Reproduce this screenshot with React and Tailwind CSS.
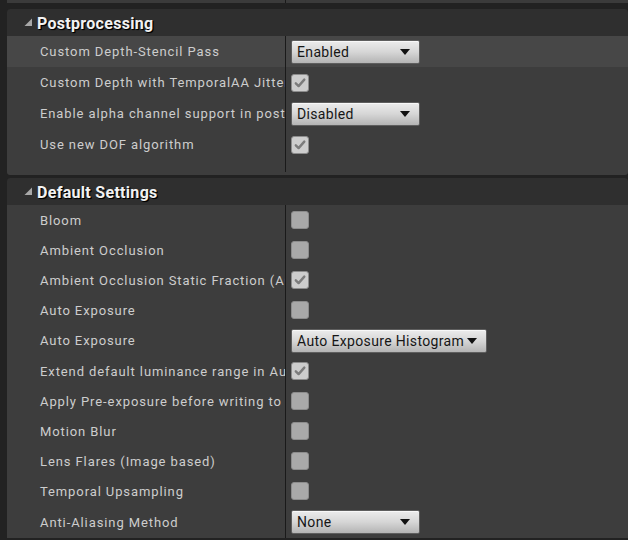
import React from "react";

const font = { fontFamily: "Roboto, 'Noto Sans', sans-serif" };

function Check({ checked }) {
  return (
    <div
      className={`w-[18px] h-[18px] rounded-[3px] border border-[#8c8c8c] flex items-center justify-center ${
        checked ? "bg-[#cdcdcd]" : "bg-[#a9a9a9]"
      }`}
    >
      {checked && (
        <svg width="12" height="12" viewBox="0 0 12 12">
          <path d="M1.8 6.3 L4.6 9.1 L10.3 2.6" fill="none" stroke="#7c7c7c" strokeWidth="2.4" strokeLinejoin="round" strokeLinecap="round" />
        </svg>
      )}
    </div>
  );
}

function Dropdown({ value, wide }) {
  return (
    <div
      className={`h-[24px] ${wide ? "w-[196px]" : "w-[129px]"} rounded-[2px] border border-[#5e5e5e] bg-gradient-to-b from-[#ececec] via-[#d6d6d6] to-[#b4b4b4] flex items-center pl-[5px] ${wide ? "pr-[9px]" : "pr-[9px]"} justify-between shadow-[inset_0_1px_0_#f8f8f8]`}
    >
      <span className="text-[14px] text-[#161616] tracking-[0.35px] leading-none whitespace-nowrap">{value}</span>
      <svg width="10" height="6" viewBox="0 0 10 6" className="shrink-0">
        <polygon points="0,0 10,0 5,6" fill="#111" />
      </svg>
    </div>
  );
}

function Row({ label, children, h = 30, highlight }) {
  return (
    <div className={`flex ${highlight ? "bg-[#474747]" : ""}`} style={{ height: h }}>
      <div className="w-[278px] shrink-0 pl-[33px] flex items-center overflow-hidden">
        <span className="text-[13px] text-[#cdcdcd] tracking-[0.9px] whitespace-nowrap leading-none">{label}</span>
      </div>
      <div className="w-px bg-[#1a1a1a] shrink-0" />
      <div className="flex-1 pl-[5px] flex items-center">{children}</div>
    </div>
  );
}

function Header({ title }) {
  return (
    <div className="h-[27px] bg-[#2f2f2f] flex items-center pl-[17px] pt-[2px] rounded-t-[3px]">
      <svg width="9" height="9" viewBox="0 0 9 9" className="mr-[4px] mb-[2px]">
        <polygon points="8,0.5 8,8 0.5,8" fill="#a8a8a8" />
      </svg>
      <span
        className="text-[16px] font-bold text-[#f2f2f2] tracking-[0.3px] leading-none"
        style={{ textShadow: "1px 1px 1px #000, 1px 1px 0 #000" }}
      >
        {title}
      </span>
    </div>
  );
}

export default function App() {
  return (
    <div className="w-[628px] h-[540px] bg-[#222222] overflow-hidden pl-[7px] flex flex-col" style={font}>
      <div className="h-[3px] bg-[#3b3b3b] flex shrink-0">
        <div className="w-[278px]" />
        <div className="w-px bg-[#1a1a1a]" />
      </div>
      <div className="h-[6px] shrink-0" />
      <div className="shrink-0 rounded-[3px] overflow-hidden">
        <Header title="Postprocessing" />
        <div className="bg-[#3d3d3d]">
          <Row label="Custom Depth-Stencil Pass" h={31} highlight>
            <Dropdown value="Enabled" />
          </Row>
          <Row label="Custom Depth with TemporalAA Jitter" h={31}>
            <Check checked />
          </Row>
          <Row label="Enable alpha channel support in post processing" h={31}>
            <Dropdown value="Disabled" />
          </Row>
          <Row label="Use new DOF algorithm" h={31}>
            <Check checked />
          </Row>
          <div className="flex h-[12px]">
            <div className="w-[278px]" />
            <div className="w-px bg-[#1a1a1a]" />
          </div>
          <div className="h-[3px]" />
        </div>
      </div>
      <div className="h-[3px] shrink-0" />
      <div className="shrink-0 rounded-t-[3px] overflow-hidden">
        <Header title="Default Settings" />
        <div className="bg-[#3d3d3d]">
          <Row label="Bloom"><Check /></Row>
          <Row label="Ambient Occlusion"><Check /></Row>
          <Row label="Ambient Occlusion Static Fraction (AO for baked lighting)"><Check checked /></Row>
          <Row label="Auto Exposure"><Check /></Row>
          <Row label="Auto Exposure" h={31}><Dropdown value="Auto Exposure Histogram" wide /></Row>
          <Row label="Extend default luminance range in Auto Exposure settings"><Check checked /></Row>
          <Row label="Apply Pre-exposure before writing to the scene color"><Check /></Row>
          <Row label="Motion Blur"><Check /></Row>
          <Row label="Lens Flares (Image based)"><Check /></Row>
          <Row label="Temporal Upsampling"><Check /></Row>
          <Row label="Anti-Aliasing Method" h={32}><Dropdown value="None" /></Row>
        </div>
      </div>
    </div>
  );
}
